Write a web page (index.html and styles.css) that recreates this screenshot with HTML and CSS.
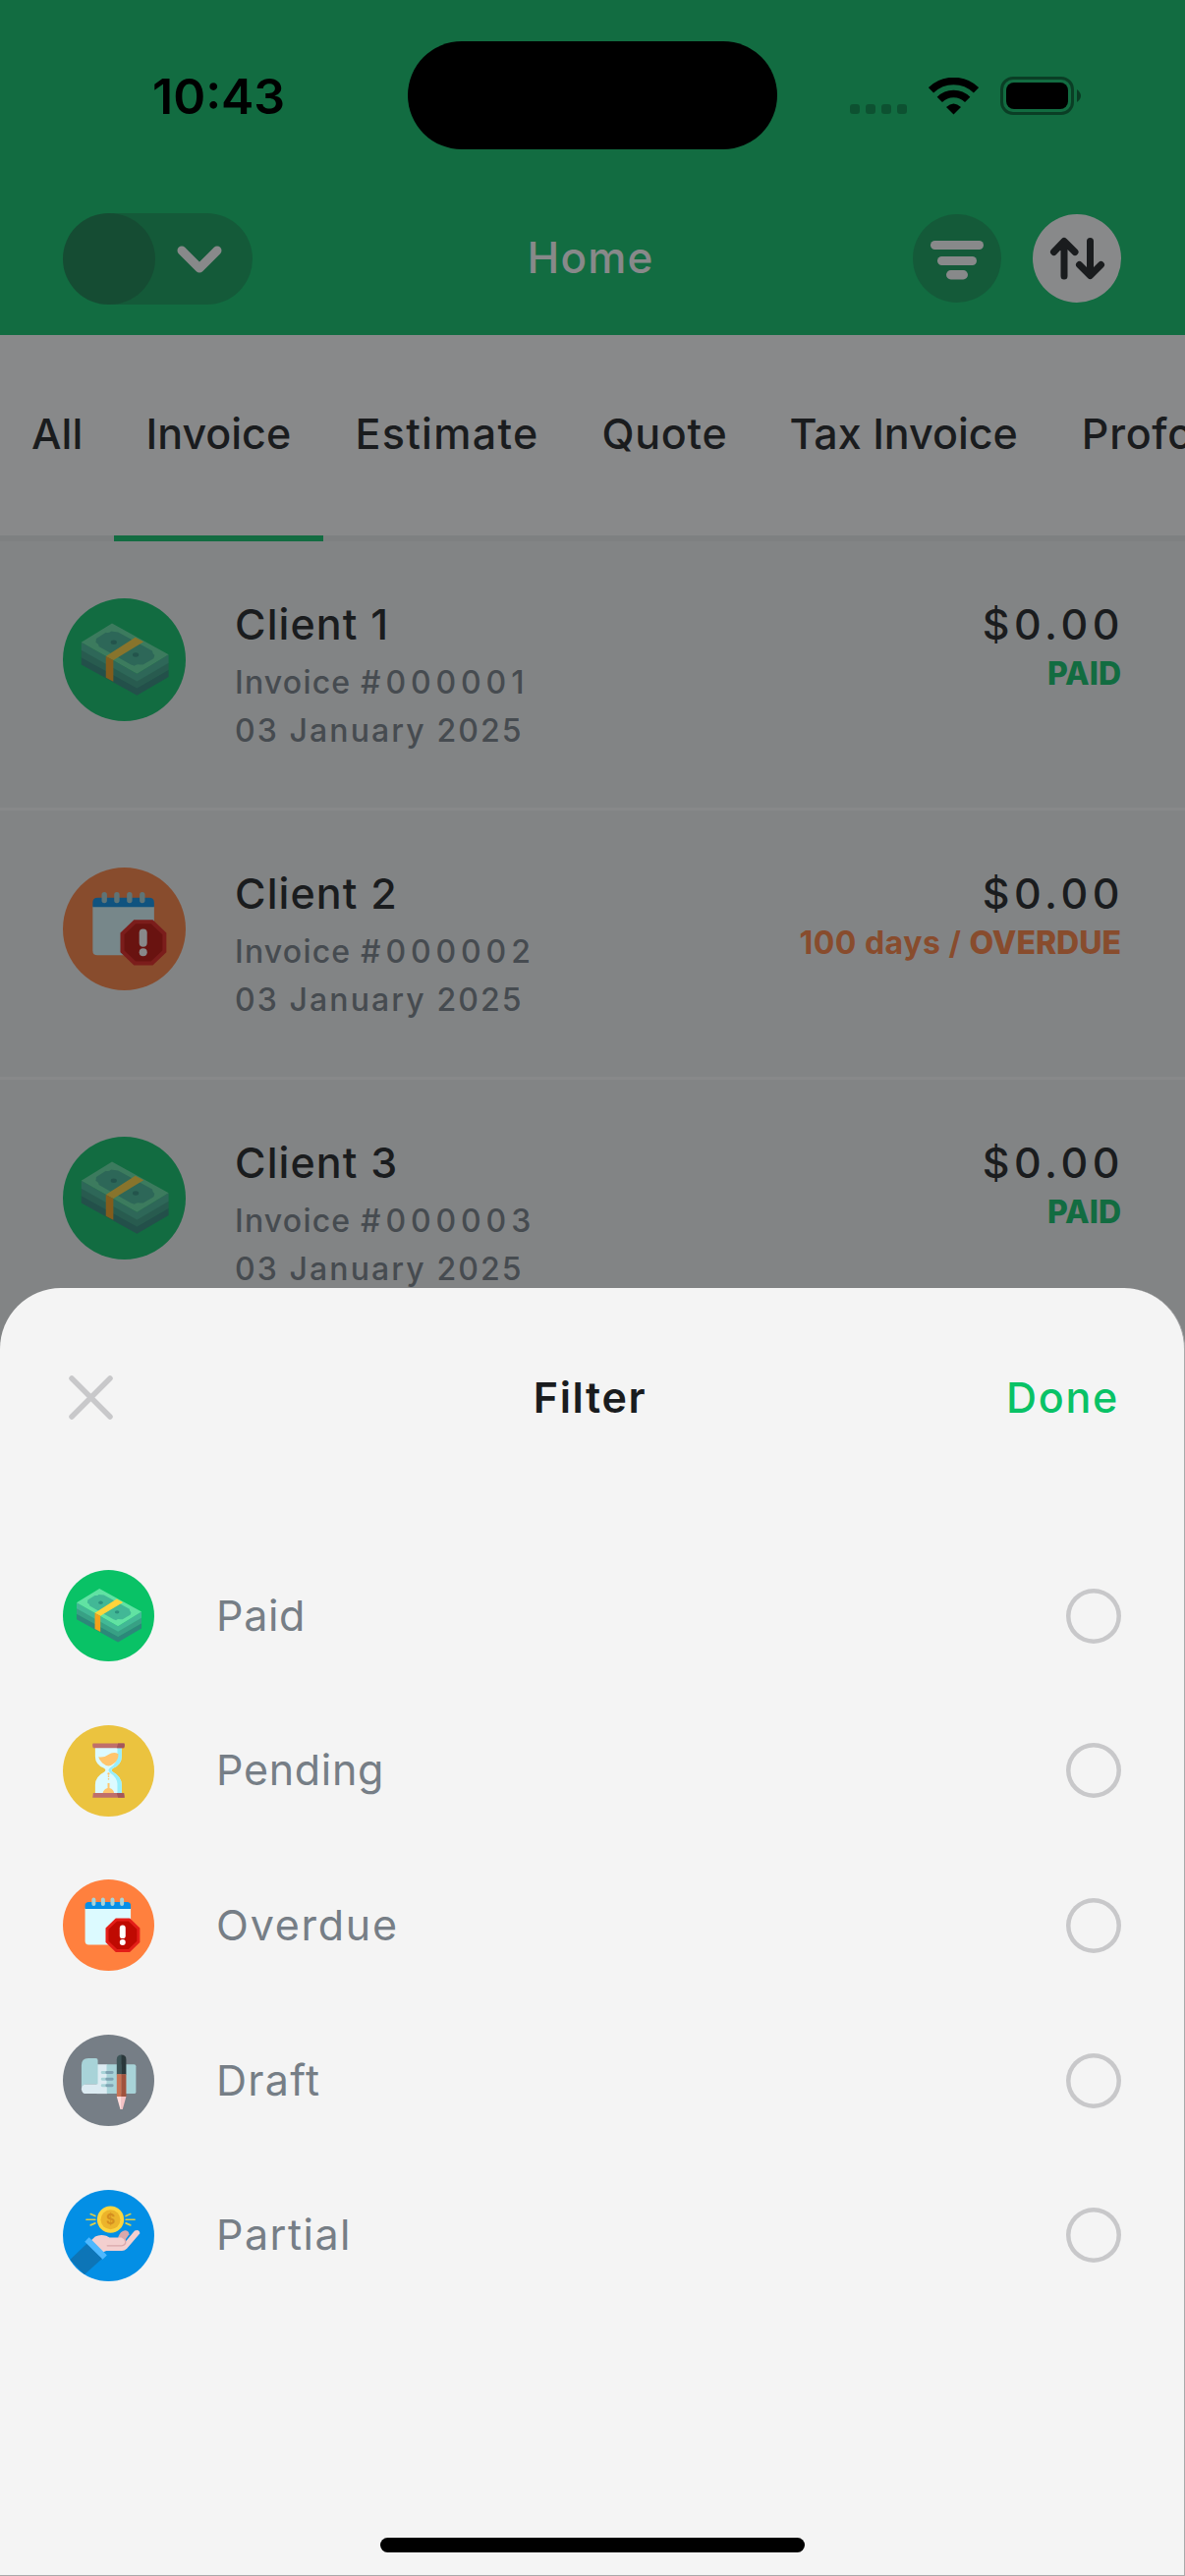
FILE: index.html
```html
<!DOCTYPE html>
<html lang="en">
<head>
<meta charset="utf-8">
<title>Home</title>
<link rel="stylesheet" href="styles.css">
</head>
<body>
<svg class="sprite" aria-hidden="true">
  <symbol id="cash" viewBox="0 0 280 280">
    <circle cx="140" cy="140" r="140" fill="#09c266"/>
    <path d="M42 134L169 204L241 163V179L169 221L42 151Z" fill="#2c887a"/>
    <path d="M42 117L169 188L241 146V163L169 205L42 135Z" fill="#38a085"/>
    <path d="M42 100L169 172L241 128V147L169 189L42 118Z" fill="#43b896"/>
    <path d="M112 57L241 128L169 172L42 100Z" fill="#61e2a3"/>
    <path d="M98 78Q105 80 110 75L126 77L204 120Q204 126 209 130L207 137L183 151L175 151Q168 149 163 154L155 151L82 110Q82 104 75 101L76 92Z" fill="#42b896"/>
    <ellipse cx="116" cy="100" rx="7" ry="5" fill="#2c917e"/>
    <ellipse cx="166" cy="129" rx="7" ry="5" fill="#2c917e"/>
    <path d="M165 89L184 99L115 141L98 132Z" fill="#ffd43b"/>
    <path d="M98 132L115 141V190L98 181Z" fill="#f3a21b"/>
  </symbol>
  <symbol id="hourglass" viewBox="0 0 280 280">
    <circle cx="140" cy="140" r="140" fill="#ebc33f"/>
    <path d="M99 69H180V96Q180 120 154 132Q145 138 154 144Q180 158 180 183V209H99V183Q99 158 126 144Q135 138 126 132Q99 120 99 96Z" fill="#dcfaff"/>
    <path d="M167 69H180V96Q180 120 154 132Q145 138 154 144Q180 158 180 183V209H167V180Q166 160 144 145Q136 138 144 131Q166 116 167 96Z" fill="#98eefb"/>
    <path d="M109 97Q126 100 138 91Q155 80 170 88Q171 105 158 116Q149 124 140 125Q130 124 121 116Q111 107 109 97Z" fill="#ffc56c"/>
    <g fill="#ffc56c"><circle cx="140" cy="149" r="3.5"/><circle cx="140" cy="157" r="2.5"/><circle cx="140" cy="165" r="2.5"/><path d="M137 178H143V193Q156 197 157 209H122Q124 197 137 193Z"/></g>
    <path d="M92 56H188Q191 63 187 70H93Q89 63 92 56ZM93 208H187L189 222H91Z" fill="#bf6f6b"/>
    <path d="M169 56H188Q191 63 187 70H165ZM165 208H187L189 222H169Z" fill="#a3565b"/>
  </symbol>
  <symbol id="calendar" viewBox="0 0 280 280">
    <circle cx="140" cy="140" r="140" fill="#ff803e"/>
    <path d="M68 88H208V200H79Q68 200 68 189Z" fill="#dcfaff"/>
    <path d="M68 90V80Q68 69 79 69H197Q208 69 208 80V90Z" fill="#058fe8"/>
    <path d="M94.500 62V75M123 62V75M152 62V75M181 62V75" stroke="#a8d3d8" stroke-width="12" stroke-linecap="round"/>
    <path d="M162 119H205L236 149V193L205 223H162L131 193V149Z" fill="#e31e18"/>
    <path d="M166 128H201L227 153V189L201 214H166L140 189V153Z" fill="#bf0a02"/>
    <path d="M183 149V172" stroke="#fff" stroke-width="18" stroke-linecap="round"/>
    <circle cx="183" cy="193" r="9" fill="#fff"/>
  </symbol>
  <symbol id="draft" viewBox="0 0 280 280">
    <circle cx="140" cy="140" r="140" fill="#767e86"/>
    <path d="M104 91H136V181H104Z" fill="#dcebf2"/>
    <path d="M134 91H218Q224 91 224 97V175Q224 181 218 181H134Z" fill="#a8d3d8"/>
    <path d="M57 168V94Q57 72 78 72H101Q107 72 107 78V152H72Q57 153 57 168Z" fill="#a8d3d8"/>
    <path d="M57 166Q57 152 72 152H134V181H72Q57 181 57 166Z" fill="#dcebf2"/>
    <path d="M121 116H135M121 136H135M121 156H135" stroke="#a8d3d8" stroke-width="9" stroke-linecap="round"/>
    <path d="M135 116H151M135 136H151M135 156H151" stroke="#7fa3b3" stroke-width="9" stroke-linecap="round"/>
    <path d="M165 122V76Q165 62 180 62V122Z" fill="#3e5558"/>
    <path d="M194 122V76Q194 62 179 62V122Z" fill="#2a383b"/>
    <path d="M165 121H180V191H165Z" fill="#c87355"/><path d="M179 121H194V191H179Z" fill="#a0523d"/>
    <path d="M165 190H180V229H176Z" fill="#ffdcdc"/><path d="M179 190H194L183 229H179Z" fill="#f5c1c4"/>
  </symbol>
  <symbol id="partial" viewBox="0 0 280 280">
    <clipPath id="disc"><circle cx="140" cy="140" r="140"/></clipPath>
    <circle cx="140" cy="140" r="140" fill="#038fe5"/>
    <path d="M75 163L121 210L66 260L22 214Z" fill="#0d75b7" clip-path="url(#disc)"/>
    <path d="M169 145Q176 126 190 124Q202 124 203 136L190 155L180 162Z" fill="#d9a8ab"/>
    <path d="M87 154L99 143Q115 135 133 141L143 146H184Q191 149 193 157L220 125Q234 119 236 133L196 180Q189 187 181 187H133L122 191Z" fill="#f3cfcf"/>
    <path d="M136 171H180Q192 170 192 159Q191 149 182 146" fill="none" stroke="#d9a8ab" stroke-width="4" stroke-linecap="round"/>
    <path d="M80 145L135 200L122 213L67 159Z" fill="#4db8ff"/>
    <circle cx="146" cy="91" r="41" fill="#fcd53f"/><circle cx="146" cy="91" r="30" fill="#ecb42b"/>
    <text x="146" y="106" text-anchor="middle" class="coin">$</text>
    <path d="M72 91H99M85 74L99 80M85 108L99 102M193 91H220M207 74L193 80M207 108L193 102" stroke="#d9ce4b" stroke-width="5" stroke-linecap="round"/>
  </symbol>
</svg>

<main class="screen">
  <header class="topbar">
    <div class="account"><span class="avatar"></span>
      <svg class="chevron" viewBox="0 0 46 28"><path d="M5 5L23 23L41 5" fill="none" stroke="#fff" stroke-width="9" stroke-linecap="round" stroke-linejoin="round"/></svg>
    </div>
    <h1 class="title">Home</h1>
    <div class="actions">
      <span class="action"><svg viewBox="0 0 90 90"><g fill="#fff"><rect x="18" y="27" width="54" height="9" rx="4.500"/><rect x="25" y="43" width="40" height="9" rx="4.500"/><rect x="34" y="57" width="22" height="9.500" rx="4.700"/></g></svg></span>
      <span class="action action-light"><svg viewBox="0 0 90 90"><path d="M32 63V29M21.500 38.500L32 27.500L43 38.500M58.500 27.500V61M47.500 51.500L58.500 62.500L69.500 51.500" fill="none" stroke="#1a1c1e" stroke-width="7" stroke-linecap="round" stroke-linejoin="round"/></svg></span>
    </div>
  </header>
  <nav class="tabs">
    <span class="tab ls-xs">All</span><span class="tab tab-active">Invoice</span><span class="tab ls-m">Estimate</span><span class="tab ls-s">Quote</span><span class="tab tab-wide">Tax Invoice</span><span class="tab ls-s">Proforma</span>
  </nav>
  <section class="list">
    <article class="row">
      <svg class="row-icon"><use href="#cash"/></svg>
      <div class="info"><p class="name">Client 1</p><p class="meta">Invoice <span class="number">#000001</span></p><p class="meta date">03 January 2025</p></div>
      <div class="total"><p class="amount">$0.00</p><p class="status paid">PAID</p></div>
    </article>
    <article class="row">
      <svg class="row-icon"><use href="#calendar"/></svg>
      <div class="info"><p class="name">Client 2</p><p class="meta">Invoice <span class="number">#000002</span></p><p class="meta date">03 January 2025</p></div>
      <div class="total"><p class="amount">$0.00</p><p class="status overdue"><span class="days">100 days / </span>OVERDUE</p></div>
    </article>
    <article class="row">
      <svg class="row-icon"><use href="#cash"/></svg>
      <div class="info"><p class="name">Client 3</p><p class="meta">Invoice <span class="number">#000003</span></p><p class="meta date">03 January 2025</p></div>
      <div class="total"><p class="amount">$0.00</p><p class="status paid">PAID</p></div>
    </article>
  </section>
</main>
<div class="scrim"></div>

<section class="sheet">
  <header class="sheet-head">
    <svg class="close" viewBox="0 0 45 45"><path d="M3 3L42 42M42 3L3 42" stroke="#c8c8ca" stroke-width="5.500" stroke-linecap="round"/></svg>
    <h2 class="sheet-title">Filter</h2>
    <span class="done">Done</span>
  </header>
  <ul class="options">
    <li class="option"><svg class="option-icon"><use href="#cash"/></svg><span class="label">Paid</span><span class="radio"></span></li>
    <li class="option"><svg class="option-icon"><use href="#hourglass"/></svg><span class="label">Pending</span><span class="radio"></span></li>
    <li class="option"><svg class="option-icon"><use href="#calendar"/></svg><span class="label ls-l">Overdue</span><span class="radio"></span></li>
    <li class="option"><svg class="option-icon"><use href="#draft"/></svg><span class="label ls-m">Draft</span><span class="radio"></span></li>
    <li class="option"><svg class="option-icon"><use href="#partial"/></svg><span class="label ls-ml">Partial</span><span class="radio"></span></li>
  </ul>
  <div class="home-indicator"></div>
</section>

<div class="statusbar">
  <span class="time">10:43</span>
  <span class="island"></span>
  <span class="signals">
    <svg class="dots" viewBox="0 0 58 38"><g fill="#000" opacity=".24"><rect y="27" width="10" height="10" rx="3"/><rect x="16" y="27" width="10" height="10" rx="3"/><rect x="32" y="27" width="10" height="10" rx="3"/><rect x="48" y="27" width="10" height="10" rx="3"/></g></svg>
    <svg class="wifi" viewBox="0 0 51 38"><path d="M2.500 12.800A33 33 0 0 1 48.500 12.800" fill="none" stroke="#000" stroke-width="7.500"/><path d="M11.300 22.300A20 20 0 0 1 39.700 22.300" fill="none" stroke="#000" stroke-width="7.500"/><path d="M18 30Q25.500 23 33 30L25.500 37.500Z"/></svg>
    <svg class="battery" viewBox="0 0 83 40"><rect x="1.500" y="1.500" width="72" height="36" rx="11.500" fill="none" stroke="#000" stroke-opacity=".42" stroke-width="3"/><rect x="6" y="6" width="63" height="27" rx="8"/><path d="M78 13Q82 16 82 19.500Q82 23 78 26Z" opacity=".45"/></svg>
  </span>
</div>
</body>
</html>
```
FILE: styles.css
```css
* { box-sizing: border-box; margin: 0; padding: 0; }
body {
  position: relative;
  width: 1206px;
  height: 2622px;
  overflow: hidden;
  font-family: Inter, "Liberation Sans", sans-serif;
  font-size: 43px;
  font-weight: 500;
  color: #1a1c1e;
  background: #f3f4f4;
}
.sprite { position: absolute; width: 0; height: 0; }
.coin { font: 700 42px Inter, sans-serif; fill: #d58f1e; }
svg { display: block; flex: none; }

.ls-xs { letter-spacing: .1px; }
.ls-s { letter-spacing: .7px; }
.ls-m { letter-spacing: 1.3px; }

/* Header */
.topbar {
  display: grid;
  grid-template-columns: 1fr auto 1fr;
  align-items: center;
  height: 341px;
  padding: 217px 65px 31px 64px;
  background: #09c266;
}
.account {
  display: flex;
  align-items: center;
  width: 193px;
  height: 93px;
  border-radius: 47px;
  background: rgba(26, 28, 30, .22);
}
.avatar { width: 94px; height: 93px; border-radius: 50%; background: rgba(26, 28, 30, .22); }
.chevron { width: 46px; height: 28px; margin-left: 22px; }
.title { padding: 0 3px 3px 0; font-size: 44px; font-weight: 500; letter-spacing: 1.2px; line-height: 60px; color: #fff; }
.actions { display: flex; justify-content: flex-end; gap: 32px; padding-bottom: 1px; }
.action { width: 90px; height: 90px; border-radius: 50%; background: rgba(26, 28, 30, .22); }
.action-light { background: #fff; }

/* Document type tabs */
.tabs {
  display: flex;
  height: 210px;
  overflow: hidden;
  background: #fff;
  box-shadow: inset 0 -6px #eaecec;
}
.tab { flex: none; height: 210px; padding: 0 32px; line-height: 201px; }
.tab-active { width: 213px; border-bottom: 6px solid #09c266; }
.tab-wide { margin-left: -1px; padding-right: 33px; }

/* Invoices */
.row {
  display: flex;
  height: 274px;
  padding: 58px 65px 0 64px;
  border-bottom: 3px solid #fff;
}
.row-icon { width: 125px; height: 125px; }
.info { flex: 1; padding: 1px 0 0 50px; }
.name { letter-spacing: 1.1px; line-height: 50px; }
.meta { font-size: 32px; font-weight: 450; line-height: 49px; color: #767e86; letter-spacing: 1.2px; }
.name + .meta { margin-top: 10px; }
.number { letter-spacing: 4.9px; }
.date { letter-spacing: 2.1px; }
.total { padding-top: 1px; text-align: right; }
.amount { margin-right: -3px; letter-spacing: 4.5px; line-height: 50px; }
.status { margin: 1px 0 0; font-size: 32px; font-weight: 800; line-height: 49px; }
.days { font-weight: 700; letter-spacing: .5px; }
.paid { color: #09c266; }
.overdue { color: #ff803e; }

.scrim { position: absolute; inset: 0; background: rgba(26, 28, 30, .52); }

/* Filter sheet */
.sheet {
  position: absolute;
  left: 0;
  right: 0;
  bottom: 0;
  display: flex;
  flex-direction: column;
  height: 1311px;
  border-right: 1px solid #a9a9aa;
  border-bottom: 1px solid #a9a9aa;
  border-radius: 62px 62px 0 0;
  background: #f4f4f4;
}
.sheet-head {
  display: grid;
  grid-template-columns: 1fr auto 1fr;
  align-items: center;
  height: 222px;
  padding: 0 66px 0 70px;
}
.close { width: 45px; height: 45px; }
.sheet-title { padding-right: 8px; font-size: 43px; font-weight: 600; letter-spacing: 1.6px; line-height: 50px; }
.done { justify-self: end; letter-spacing: 1.7px; line-height: 50px; color: #09c266; }
.options { display: flex; flex-direction: column; gap: 64.7px; padding: 65px 63px 0 64px; list-style: none; }
.option { display: flex; align-items: center; height: 93px; }
.option-icon { width: 93px; height: 93px; }
.label { flex: 1; padding: 0 0 2px 63px; font-weight: 400; letter-spacing: .7px; color: #767e86; }
.label.ls-m { letter-spacing: 1.3px; }
.label.ls-ml { letter-spacing: 1.5px; }
.label.ls-l { letter-spacing: 1.75px; }
.radio { width: 56px; height: 56px; margin-right: 1px; border-radius: 50%; box-shadow: inset 0 0 0 4.5px #c8c8ca; }
.home-indicator { width: 432px; height: 15px; margin: auto auto 23px 387px; border-radius: 8px; background: #000; }

/* System status bar, drawn over everything */
.statusbar {
  position: absolute;
  top: 0;
  left: 0;
  right: 0;
  display: flex;
  align-items: flex-start;
  height: 183px;
  padding: 42px 105px 0 155px;
}
.time { width: 260px; font-size: 50px; font-weight: 600; line-height: 112px; color: #000; }
.island { width: 377px; height: 110px; border-radius: 55px; background: #000; }
.signals { display: flex; margin: 36px 0 0 74px; }
.dots { width: 58px; height: 38px; margin-top: 1px; }
.wifi { width: 51px; height: 38px; margin: 1px 0 0 22px; }
.battery { width: 83px; height: 40px; margin-left: 22px; }
```
